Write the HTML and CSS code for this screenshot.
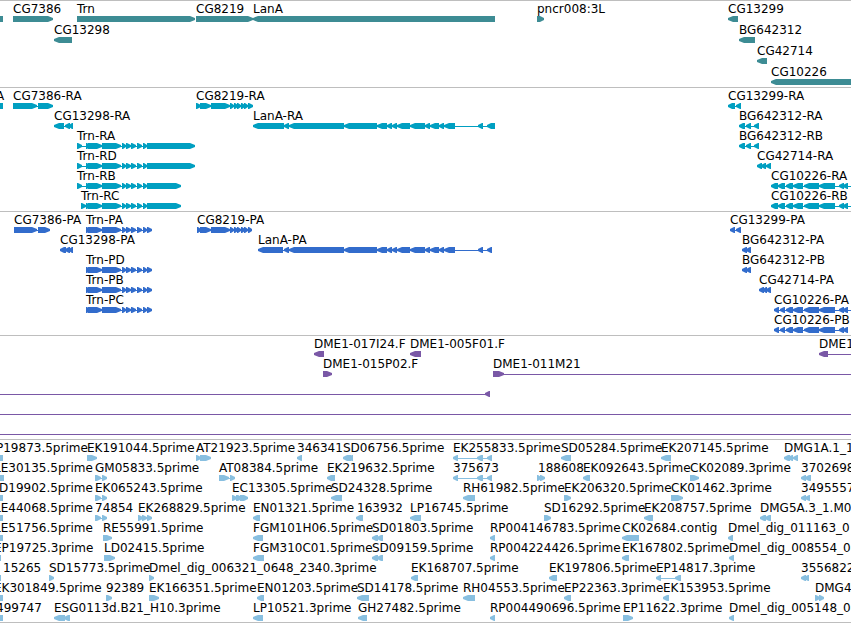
FILE: index.html
```
<!DOCTYPE html>
<html lang="en">
<head>
  <meta charset="UTF-8">
  <meta name="viewport" content="width=device-width, initial-scale=1.0">
  <title>Genome Browser</title>
  <link rel="stylesheet" href="styles.css">
</head>
<body>
  <main class="browser">
    <section class="track track-gene" id="gene" aria-label="Genes"></section>
    <section class="track track-mrna" id="mrna" aria-label="Transcripts"></section>
    <section class="track track-cds" id="cds" aria-label="CDS"></section>
    <section class="track track-bac" id="bac" aria-label="BACs"></section>
    <section class="track track-est" id="est" aria-label="ESTs"></section>
  </main>
  <script src="tracks.js"></script>
</body>
</html>
```

FILE: styles.css
```
body {
  margin: 0;
  background: #fff;
  color: #000;
  font-family: "DejaVu Sans", Verdana, sans-serif;
  font-size: 12px;
  line-height: 14px;
}

.browser {
  border-bottom: 1px solid #bebebe;
  overflow: hidden;
}

.track {
  border-top: 1px solid #bebebe;
  padding: 1px 0 2px;
}

.track-gene { color: #3d8c94; }
.track-mrna { color: #009fc1; }
.track-cds { color: #326ccc; }
.track-bac { color: #7a58a6; }
.track-est { color: #88bfe0; }

.track-gene,
.track-est {
  padding-bottom: 1px;
}

.lane {
  position: relative;
  padding-top: 14px;
}

.track-gene .lane {
  padding-bottom: 1px;
}

.label {
  position: absolute;
  top: 0;
  color: #000;
  white-space: nowrap;
}

.glyphs {
  display: block;
  width: 100%;
  height: 6px;
  fill: currentColor;
}
```

FILE: tracks.js
```
// feature: [label, strand, start, "exon exon ...", line start, line end]
// strand is +, - or = (no arrow head)
const FAR = 5000;

const lanA = '289-344 344-377 377-387 387-392 392-397 397-410 410-425 425-430 430-439 439-444 444-455 478-483';
const trn = '86-90 88-102 102-121 122-126 126-131 131-136 137-142 143-147';
const cg8219 = '211-230 230-234 234-238 237-241 241-245 244-248';
const cg10226 = '786-793 793-803 804-819 819-835 839-844 843-848';

const tracks = {
  gene: [
    [
      ['', '=', 0, '0-3'],
      ['CG7386', '+', 13, '13-53'],
      ['Trn', '+', 77, '77-195'],
      ['CG8219', '+', 196, '196-253'],
      ['LanA', '-', 253, '253-495'],
      ['pncr008:3L', '+', 537, '537-544'],
      ['CG13299', '-', 728, '728-738']
    ],
    [
      ['CG13298', '-', 54, '54-72'],
      ['BG642312', '-', 739, '739-755']
    ],
    [['CG42714', '-', 757, '757-767']],
    [['CG10226', '-', 771, '771-5000']]
  ],
  mrna: [
    [
      ['A', '=', -4, '0-3'],
      ['CG7386-RA', '+', 13, '13-37 38-53'],
      ['CG8219-RA', '+', 196, '196-201 200-211 ' + cg8219 + ' 248-253'],
      ['CG13299-RA', '-', 728, '728-735 736-741']
    ],
    [
      ['CG13298-RA', '-', 54, '54-64 65-70 69-73'],
      ['LanA-RA', '-', 253, '253-284 284-289 ' + lanA + ' 487-495'],
      ['BG642312-RA', '-', 739, '739-745 746-751 754-759']
    ],
    [
      ['Trn-RA', '+', 77, '77-82 ' + trn + ' 147-195'],
      ['BG642312-RB', '-', 739, '739-745 746-751 754-759']
    ],
    [
      ['Trn-RD', '+', 77, '77-82 ' + trn + ' 147-195'],
      ['CG42714-RA', '-', 757, '757-762 761-766 766-771']
    ],
    [
      ['Trn-RB', '+', 77, '77-82 ' + trn + ' 147-181'],
      ['CG10226-RA', '-', 771, '771-778 778-785 ' + cg10226, 771, 860]
    ],
    [
      ['Trn-RC', '+', 81, '81-86 ' + trn + ' 147-181'],
      ['CG10226-RB', '-', 771, '771-778 778-785 ' + cg10226, 771, 860]
    ]
  ],
  cds: [
    [
      ['CG7386-PA', '+', 14, '14-37 38-50'],
      ['Trn-PA', '+', 86, trn + ' 147-152'],
      ['CG8219-PA', '+', 197, '197-201 200-211 ' + cg8219 + ' 248-252'],
      ['CG13299-PA', '-', 730, '730-735 736-741']
    ],
    [
      ['CG13298-PA', '-', 60, '60-66 65-70 69-73'],
      ['LanA-PA', '-', 258, '258-283 284-289 ' + lanA + ' 487-492'],
      ['BG642312-PA', '-', 742, '742-747 746-751']
    ],
    [
      ['Trn-PD', '+', 86, trn + ' 147-152'],
      ['BG642312-PB', '-', 742, '742-747 746-751']
    ],
    [
      ['Trn-PB', '+', 86, trn + ' 147-152'],
      ['CG42714-PA', '-', 759, '759-764 763-767 766-771']
    ],
    [
      ['Trn-PC', '+', 86, trn + ' 147-152'],
      ['CG10226-PA', '-', 774, '774-779 780-785 ' + cg10226, 774, 860]
    ],
    [['CG10226-PB', '-', 774, '774-779 780-785 ' + cg10226]]
  ],
  bac: [
    [
      ['DME1-017I24.F', '-', 314, '314-324'],
      ['DME1-005F01.F', '-', 410, '410-421'],
      ['DME1', '-', 819, '819-828', 819, FAR]
    ],
    [
      ['DME1-015P02.F', '+', 323, '323-332'],
      ['DME1-011M21', '+', 493, '493-504', 493, FAR]
    ],
    [['', '-', 0, '485-490', 0, 490]],
    [['', '-', 0, '', 0, FAR]],
    [['', '-', 0, '', 0, FAR]]
  ],
  est: [
    [
      ['P19873.5prime', '=', -4, '0-3'],
      ['EK191044.5prime', '+', 87, '87-97'],
      ['AT21923.5prime', '+', 196, '196-201 200-211'],
      ['346341', '-', 297, '297-302'],
      ['SD06756.5prime', '-', 343, '343-351 348-353'],
      ['EK255833.5prime', '-', 453, '453-458 477-483 487-492'],
      ['SD05284.5prime', '-', 561, '561-571'],
      ['EK207145.5prime', '-', 661, '661-671'],
      ['DMG1A.1_1', '-', 784, '784-790 788-793 793-798']
    ],
    [
      ['LE30135.5prime', '=', -6, '0-4'],
      ['GM05833.5prime', '+', 95, '95-101 102-107'],
      ['AT08384.5prime', '+', 219, '219-229 230-235'],
      ['EK219632.5prime', '-', 327, '327-335'],
      ['375673', '-', 453, '453-458 477-483 487-492'],
      ['188608', '+', 538, '537-541 540-545'],
      ['EK092643.5prime', '-', 583, '583-590'],
      ['CK02089.3prime', '+', 690, '690-699'],
      ['3702698', '-', 801, '801-806 805-811']
    ],
    [
      ['D19902.5prime', '=', -1, '0-3'],
      ['EK065243.5prime', '+', 95, '95-101 102-107'],
      ['EC13305.5prime', '+', 232, '232-237 236-242 240-248'],
      ['SD24328.5prime', '-', 331, '331-342'],
      ['RH61982.5prime', '-', 463, '463-475'],
      ['EK206320.5prime', '+', 564, '564-571'],
      ['CK01462.3prime', '+', 671, '671-683'],
      ['3495557', '-', 801, '801-806 805-810']
    ],
    [
      ['LE44068.5prime', '=', -6, '0-3'],
      ['74854', '+', 95, '95-101 102-107'],
      ['EK268829.5prime', '+', 138, '138-143 142-147 147-152'],
      ['EN01321.5prime', '-', 253, '253-260'],
      ['163932', '-', 357, '356-363'],
      ['LP16745.5prime', '-', 410, '410-421'],
      ['SD16292.5prime', '+', 544, '544-551'],
      ['EK208757.5prime', '-', 644, '644-653'],
      ['DMG5A.3_1.M0', '-', 760, '760-766 765-771']
    ],
    [
      ['LE51756.5prime', '=', -6, '0-3'],
      ['RE55991.5prime', '+', 103, '103-112'],
      ['FGM101H06.5prime', '-', 253, '253-263'],
      ['SD01803.5prime', '-', 372, '372-378 377-383'],
      ['RP004146783.5prime', '-', 490, '490-495'],
      ['CK02684.contig', '-', 622, '622-639'],
      ['Dmel_dig_011163_0', '-', 728, '728-733']
    ],
    [
      ['EP19725.3prime', '=', -6, '0-1'],
      ['LD02415.5prime', '+', 104, '104-115'],
      ['FGM310C01.5prime', '-', 253, '253-264'],
      ['SD09159.5prime', '-', 372, '372-378 377-383'],
      ['RP004224426.5prime', '-', 490, '490-495'],
      ['EK167802.5prime', '-', 622, '622-629'],
      ['Dmel_dig_008554_0', '-', 729, '729-734']
    ],
    [
      ['15265', '=', 3, '0-1'],
      ['SD15773.5prime', '+', 49, '49-54'],
      ['Dmel_dig_006321_0648_2340.3prime', '+', 149, '149-154'],
      ['EK168707.5prime', '-', 411, '411-418'],
      ['EK197806.5prime', '-', 549, '549-557'],
      ['EP14817.3prime', '-', 656, '656-661 675-681'],
      ['3556822', '-', 801, '801-806 804-809']
    ],
    [
      ['EK301849.5prime', '=', -6, '0-3'],
      ['92389', '+', 106, '106-112'],
      ['EK166351.5prime', '+', 149, '149-159'],
      ['EN01203.5prime', '-', 257, '257-264'],
      ['SD14178.5prime', '-', 357, '357-369'],
      ['RH04553.5prime', '-', 463, '463-475'],
      ['EP22363.3prime', '-', 564, '564-571'],
      ['EK153953.5prime', '-', 663, '663-669'],
      ['DMG4', '+', 815, '815-820 819-824']
    ],
    [
      ['499747', '=', -4, '0-3'],
      ['ESG0113d.B21_H10.3prime', '-', 54, '54-65 64-70'],
      ['LP10521.3prime', '-', 253, '253-263'],
      ['GH27482.5prime', '-', 358, '358-367'],
      ['RP004490696.5prime', '-', 490, '490-495'],
      ['EP11622.3prime', '+', 623, '623-633'],
      ['Dmel_dig_005148_0', '-', 729, '729-734']
    ]
  ]
};

// box with a blunt arrow head on the strand side
function exon(s, e, strand) {
  if (strand === '=') return `M${s} 0H${e}V6H${s}Z`;
  const head = Math.min(e - s > 8 ? 5 : 4, e - s - 1);
  if (strand === '+') return `M${s} 0H${e - head}L${e} 2V4L${e - head} 6H${s}Z`;
  return `M${s + head} 0H${e}V6H${s + head}L${s} 4V2Z`;
}

function drawLane(features) {
  let labels = '';
  let shapes = '';
  features.forEach(([name, strand, x, exons, from, to]) => {
    const parts = exons ? exons.split(' ').map(p => p.split('-').map(Number)) : [];
    if (from === undefined) {
      from = parts[0][0];
      to = parts[parts.length - 1][1];
    }
    if (name) labels += `<span class="label" style="left:${x}px">${name}</span>`;
    shapes += `<rect x="${from}" y="3" width="${to - from}" height="1"/>`;
    // one path per exon, neighbours may overlap
    shapes += parts.map(([s, e]) => `<path d="${exon(s, e, strand)}"/>`).join('');
  });
  return `<div class="lane">${labels}<svg class="glyphs" aria-hidden="true">${shapes}</svg></div>`;
}

Object.keys(tracks).forEach(id => {
  document.getElementById(id).innerHTML = tracks[id].map(drawLane).join('');
});
```
